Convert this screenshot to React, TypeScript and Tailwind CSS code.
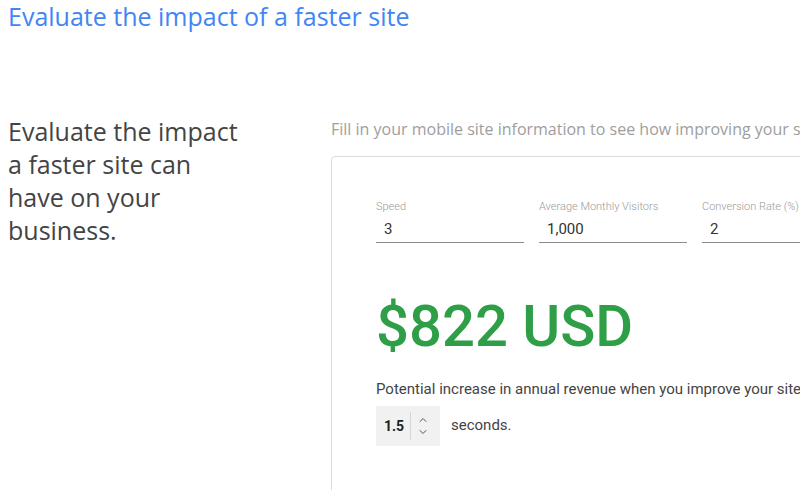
import { ChevronUp, ChevronDown } from 'lucide-react'

const fields = [
  { label: 'Speed', value: '3' },
  { label: 'Average Monthly Visitors', value: '1,000' },
  { label: 'Conversion Rate (%)', value: '2' },
]

export default function App() {
  return (
    <div className="w-[800px] h-[490px] overflow-hidden bg-white font-['Roboto',sans-serif]">
      <h1 className="pl-2 pt-[1px] font-['Open_Sans',sans-serif] text-[25px] leading-[30px] text-[#4285f4] whitespace-nowrap">
        Evaluate the impact of a faster site
      </h1>

      <div className="flex mt-[88px] pl-2">
        {/* Left heading */}
        <h2 className="w-[236px] font-['Open_Sans',sans-serif] text-[25px] leading-[33px] text-[#444] shrink-0 -mt-[4px]">
          Evaluate the impact a faster site can have on your business.
        </h2>

        {/* Calculator */}
        <div className="ml-[87px] flex flex-col shrink-0">
          <p className="font-['Open_Sans',sans-serif] text-[16px] leading-[20px] text-[#9e9e9e] whitespace-nowrap">
            Fill in your mobile site information to see how improving your site speed can impact your revenue.
          </p>

          <div className="mt-[17px] w-[600px] h-[340px] border border-[#dcdcdc] rounded-[4px] pl-[44px] pt-[43px]">
            <div className="flex gap-[15px]">
              {fields.map((f) => (
                <div key={f.label} className="w-[148px] shrink-0">
                  <div className="text-[11px] leading-[14px] font-light text-[#9a9a9a] whitespace-nowrap">
                    {f.label}
                  </div>
                  <div className="mt-[6px] pl-[8px] pb-[4px] text-[15px] leading-[18px] text-[#333] border-b border-[#8a8a8a]">
                    {f.value}
                  </div>
                </div>
              ))}
            </div>

            <div className="mt-[45px] text-[58px] leading-[76px] font-medium text-[#2e9e47] whitespace-nowrap">
              $822 USD
            </div>

            <p className="mt-[15px] text-[15px] leading-[20px] text-[#444] whitespace-nowrap">
              Potential increase in annual revenue when you improve your site speed from 3 to
            </p>

            <div className="mt-[7px] flex items-center gap-[11px]">
              <div className="flex items-center w-[64px] h-[40px] bg-[#f1f1f1]">
                <span className="pl-[8px] w-[34px] text-[14px] font-bold text-[#222]">1.5</span>
                <div className="w-px h-[28px] bg-[#d6d6d6]" />
                <div className="flex flex-col items-center pl-[6px] text-[#555]">
                  <ChevronUp size={12} strokeWidth={2} />
                  <ChevronDown size={12} strokeWidth={2} />
                </div>
              </div>
              <span className="text-[15px] text-[#444] -mt-[2px]">seconds.</span>
            </div>
          </div>
        </div>
      </div>
    </div>
  )
}
